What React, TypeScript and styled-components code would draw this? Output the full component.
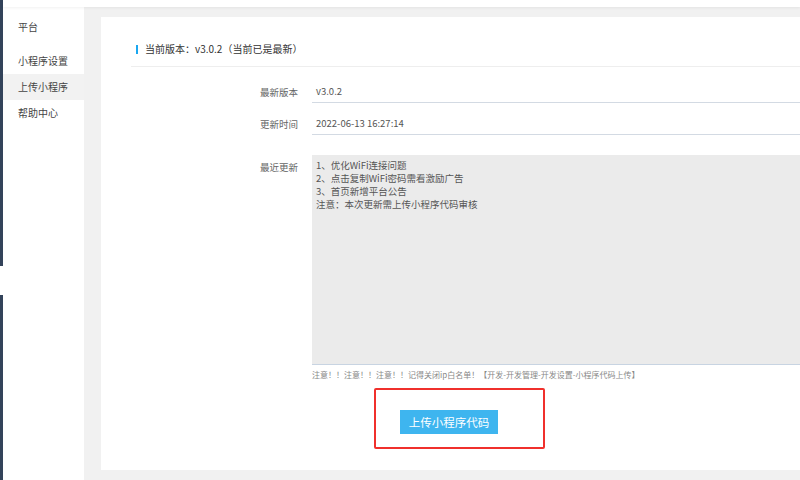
import React from "react";
import styled, { createGlobalStyle } from "styled-components";

const Global = createGlobalStyle`
  html, body { margin: 0; padding: 0; background: #fff; }
  body { font-family: "Noto Sans CJK SC", "Microsoft YaHei", sans-serif; }
  * { box-sizing: border-box; }
`;

const Page = styled.div`
  display: flex;
  width: 800px;
  height: 480px;
  overflow: hidden;
  background: #fff;
`;

const EdgeStrip = styled.div`
  width: 3px;
  display: flex;
  flex-direction: column;
  gap: 29px;
`;

const EdgeSegment = styled.div<{ $h?: number }>`
  background: #33435a;
  ${(p) => (p.$h ? `height: ${p.$h}px;` : "flex: 1;")}
`;

const Main = styled.div`
  flex: 1;
  display: flex;
  flex-direction: column;
  min-width: 0;
`;

const TopBar = styled.div`
  height: 7px;
  background: #fff;
  box-shadow: 0 1px 3px rgba(0, 0, 0, 0.06);
  position: relative;
  z-index: 1;
`;

const Body = styled.div`
  flex: 1;
  display: flex;
  min-height: 0;
`;

const Sidebar = styled.nav`
  width: 81px;
  background: #fff;
  padding-top: 7px;
  display: flex;
  flex-direction: column;
`;

const SideTitle = styled.div`
  height: 26px;
  line-height: 26px;
  padding-left: 15px;
  font-size: 10px;
  color: #444;
  margin-bottom: 8px;
`;

const SideItem = styled.div<{ $active?: boolean }>`
  height: 26px;
  line-height: 26px;
  padding-left: 15px;
  font-size: 10px;
  color: #444;
  background: ${(p) => (p.$active ? "#f2f2f2" : "transparent")};
`;

const Content = styled.div`
  flex: 1;
  background: #f1f1f1;
  padding: 10px 0 10px 17px;
  overflow: hidden;
  min-width: 0;
`;

const Card = styled.section`
  width: 760px;
  height: 100%;
  background: #fff;
  display: flex;
  flex-direction: column;
`;

const Header = styled.div`
  margin-left: 30px;
  padding: 24px 0 9px 5px;
  border-bottom: 1px solid #eeeeee;
  display: flex;
  align-items: center;
  gap: 7px;
`;

const Accent = styled.span`
  width: 2px;
  height: 9px;
  background: #1aa7f0;
`;

const HeaderText = styled.span`
  font-size: 10px;
  line-height: 16px;
  color: #333;
`;

const Form = styled.div`
  display: flex;
  flex-direction: column;
  padding-top: 14px;
`;

const Row = styled.div<{ $mt?: number }>`
  display: flex;
  align-items: flex-start;
  gap: 14px;
  margin-top: ${(p) => p.$mt ?? 0}px;
`;

const Label = styled.div<{ $top?: number }>`
  width: 197px;
  text-align: right;
  font-size: 9.5px;
  line-height: 22px;
  color: #666;
  padding-top: ${(p) => p.$top ?? 0}px;
`;

const Field = styled.div`
  flex: 1;
  height: 22px;
  line-height: 20px;
  padding-left: 4px;
  font-size: 9.5px;
  color: #555;
  border-bottom: 1px solid #d3dae3;
`;

const FieldColumn = styled.div`
  flex: 1;
  display: flex;
  flex-direction: column;
`;

const TextArea = styled.div`
  height: 210px;
  background: #ebebeb;
  border-bottom: 1px solid #c8d4e2;
  padding: 4px 4px;
  font-size: 9.5px;
  line-height: 13px;
  color: #555;
  white-space: pre-line;
`;

const Note = styled.div`
  font-size: 8px;
  line-height: 12px;
  color: #888;
  margin-top: 4px;
  white-space: nowrap;
`;

const Highlight = styled.div`
  align-self: flex-start;
  margin-top: 7px;
  margin-left: 62px;
  padding: 18px 45px 13px 24px;
  border: 2px solid #f0302c;
  border-radius: 2px;
`;

const Button = styled.button`
  width: 98px;
  height: 24px;
  border: none;
  border-radius: 0;
  background: #3eb5ef;
  color: #fff;
  font-family: inherit;
  font-size: 11.5px;
  padding: 0;
  cursor: pointer;
`;

const notes = `1、优化WiFi连接问题
2、点击复制WiFi密码需看激励广告
3、首页新增平台公告
注意：本次更新需上传小程序代码审核`;

export default function App() {
  return (
    <>
      <Global />
      <Page>
        <EdgeStrip>
          <EdgeSegment $h={266} />
          <EdgeSegment />
        </EdgeStrip>
        <Main>
          <TopBar />
          <Body>
            <Sidebar>
              <SideTitle>平台</SideTitle>
              <SideItem>小程序设置</SideItem>
              <SideItem $active>上传小程序</SideItem>
              <SideItem>帮助中心</SideItem>
            </Sidebar>
            <Content>
              <Card>
                <Header>
                  <Accent />
                  <HeaderText>当前版本：v3.0.2（当前已是最新）</HeaderText>
                </Header>
                <Form>
                  <Row>
                    <Label>最新版本</Label>
                    <Field>v3.0.2</Field>
                  </Row>
                  <Row $mt={10}>
                    <Label>更新时间</Label>
                    <Field>2022-06-13 16:27:14</Field>
                  </Row>
                  <Row $mt={20}>
                    <Label $top={1}>最近更新</Label>
                    <FieldColumn>
                      <TextArea>{notes}</TextArea>
                      <Note>
                        注意！！注意！！注意！！记得关闭ip白名单！【开发-开发管理-开发设置-小程序代码上传】
                      </Note>
                      <Highlight>
                        <Button>上传小程序代码</Button>
                      </Highlight>
                    </FieldColumn>
                  </Row>
                </Form>
              </Card>
            </Content>
          </Body>
        </Main>
      </Page>
    </>
  );
}
